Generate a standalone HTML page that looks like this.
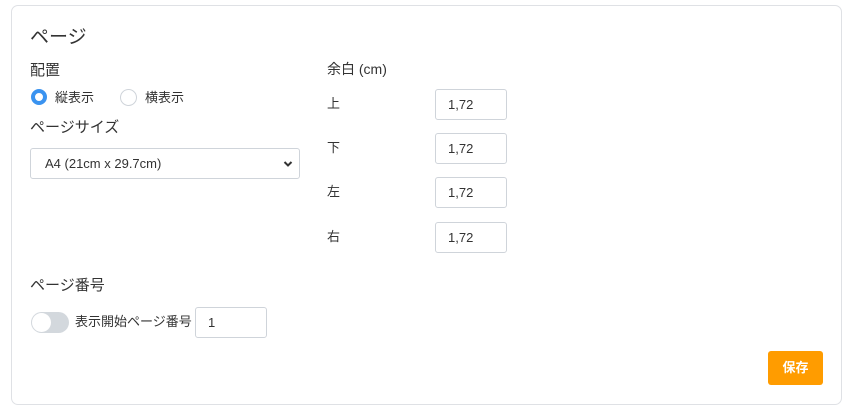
<!DOCTYPE html>
<html><head><meta charset="utf-8"><style>
*{box-sizing:border-box;margin:0;padding:0}
body{width:850px;height:410px;background:#fff;font-family:"Liberation Sans","Noto Sans CJK JP",sans-serif;color:#333;position:relative;overflow:hidden}
.card{position:absolute;left:11px;top:5px;width:831px;height:400px;border:1px solid #dfe1e5;border-radius:7px}
.a{position:absolute;white-space:nowrap}
.inp{position:absolute;border:1px solid #cfd4da;border-radius:3px;background:#fff;font-size:13px;padding-left:12px;line-height:30px;color:#333}
</style></head><body>
<div class="card"></div>
<div class="a" style="left:30px;top:22px;font-size:19px;color:#333">ページ</div>
<div class="a" style="left:30px;top:59px;font-size:15px">配置</div>
<div class="a" style="left:31px;top:89px;width:16px;height:16px;border-radius:50%;border:4px solid #3a93f0;background:#fff"></div>
<div class="a" style="left:55px;top:87px;font-size:13px">縦表示</div>
<div class="a" style="left:120px;top:89px;width:17px;height:17px;border-radius:50%;border:1px solid #cfd4da;background:#fff"></div>
<div class="a" style="left:145px;top:87px;font-size:13px">横表示</div>
<div class="a" style="left:30px;top:116px;font-size:15px">ページサイズ</div>
<div class="inp" style="left:30px;top:148px;width:270px;height:31px;padding-left:14px">A4 (21cm x 29.7cm)
<svg style="position:absolute;right:6px;top:11px" width="10" height="8" viewBox="0 0 10 8"><path d="M1.5 2 L5 5.5 L8.5 2" stroke="#333" stroke-width="2" fill="none"/></svg></div>
<div class="a" style="left:327px;top:59px;font-size:14px">余白 (cm)</div>
<div class="a" style="left:327px;top:93px;font-size:13px">上</div>
<div class="inp" style="left:435px;top:89px;width:72px;height:31px">1,72</div>
<div class="a" style="left:327px;top:137px;font-size:13px">下</div>
<div class="inp" style="left:435px;top:133px;width:72px;height:31px">1,72</div>
<div class="a" style="left:327px;top:181px;font-size:13px">左</div>
<div class="inp" style="left:435px;top:177px;width:72px;height:31px">1,72</div>
<div class="a" style="left:327px;top:226px;font-size:13px">右</div>
<div class="inp" style="left:435px;top:222px;width:72px;height:31px">1,72</div>
<div class="a" style="left:30px;top:274px;font-size:15px">ページ番号</div>
<div class="a" style="left:31px;top:312px;width:38px;height:21px;border-radius:11px;background:#d3d8dd"></div>
<div class="a" style="left:32px;top:313px;width:19px;height:19px;border-radius:50%;background:#fff"></div>
<div class="a" style="left:75px;top:311px;font-size:13px">表示開始ページ番号</div>
<div class="inp" style="left:195px;top:307px;width:72px;height:31px">1</div>
<div class="a" style="left:768px;top:351px;width:55px;height:34px;background:#ff9c00;border-radius:3px;color:#fff;font-weight:bold;font-size:13px;text-align:center;line-height:34px">保存</div>
</body></html>
